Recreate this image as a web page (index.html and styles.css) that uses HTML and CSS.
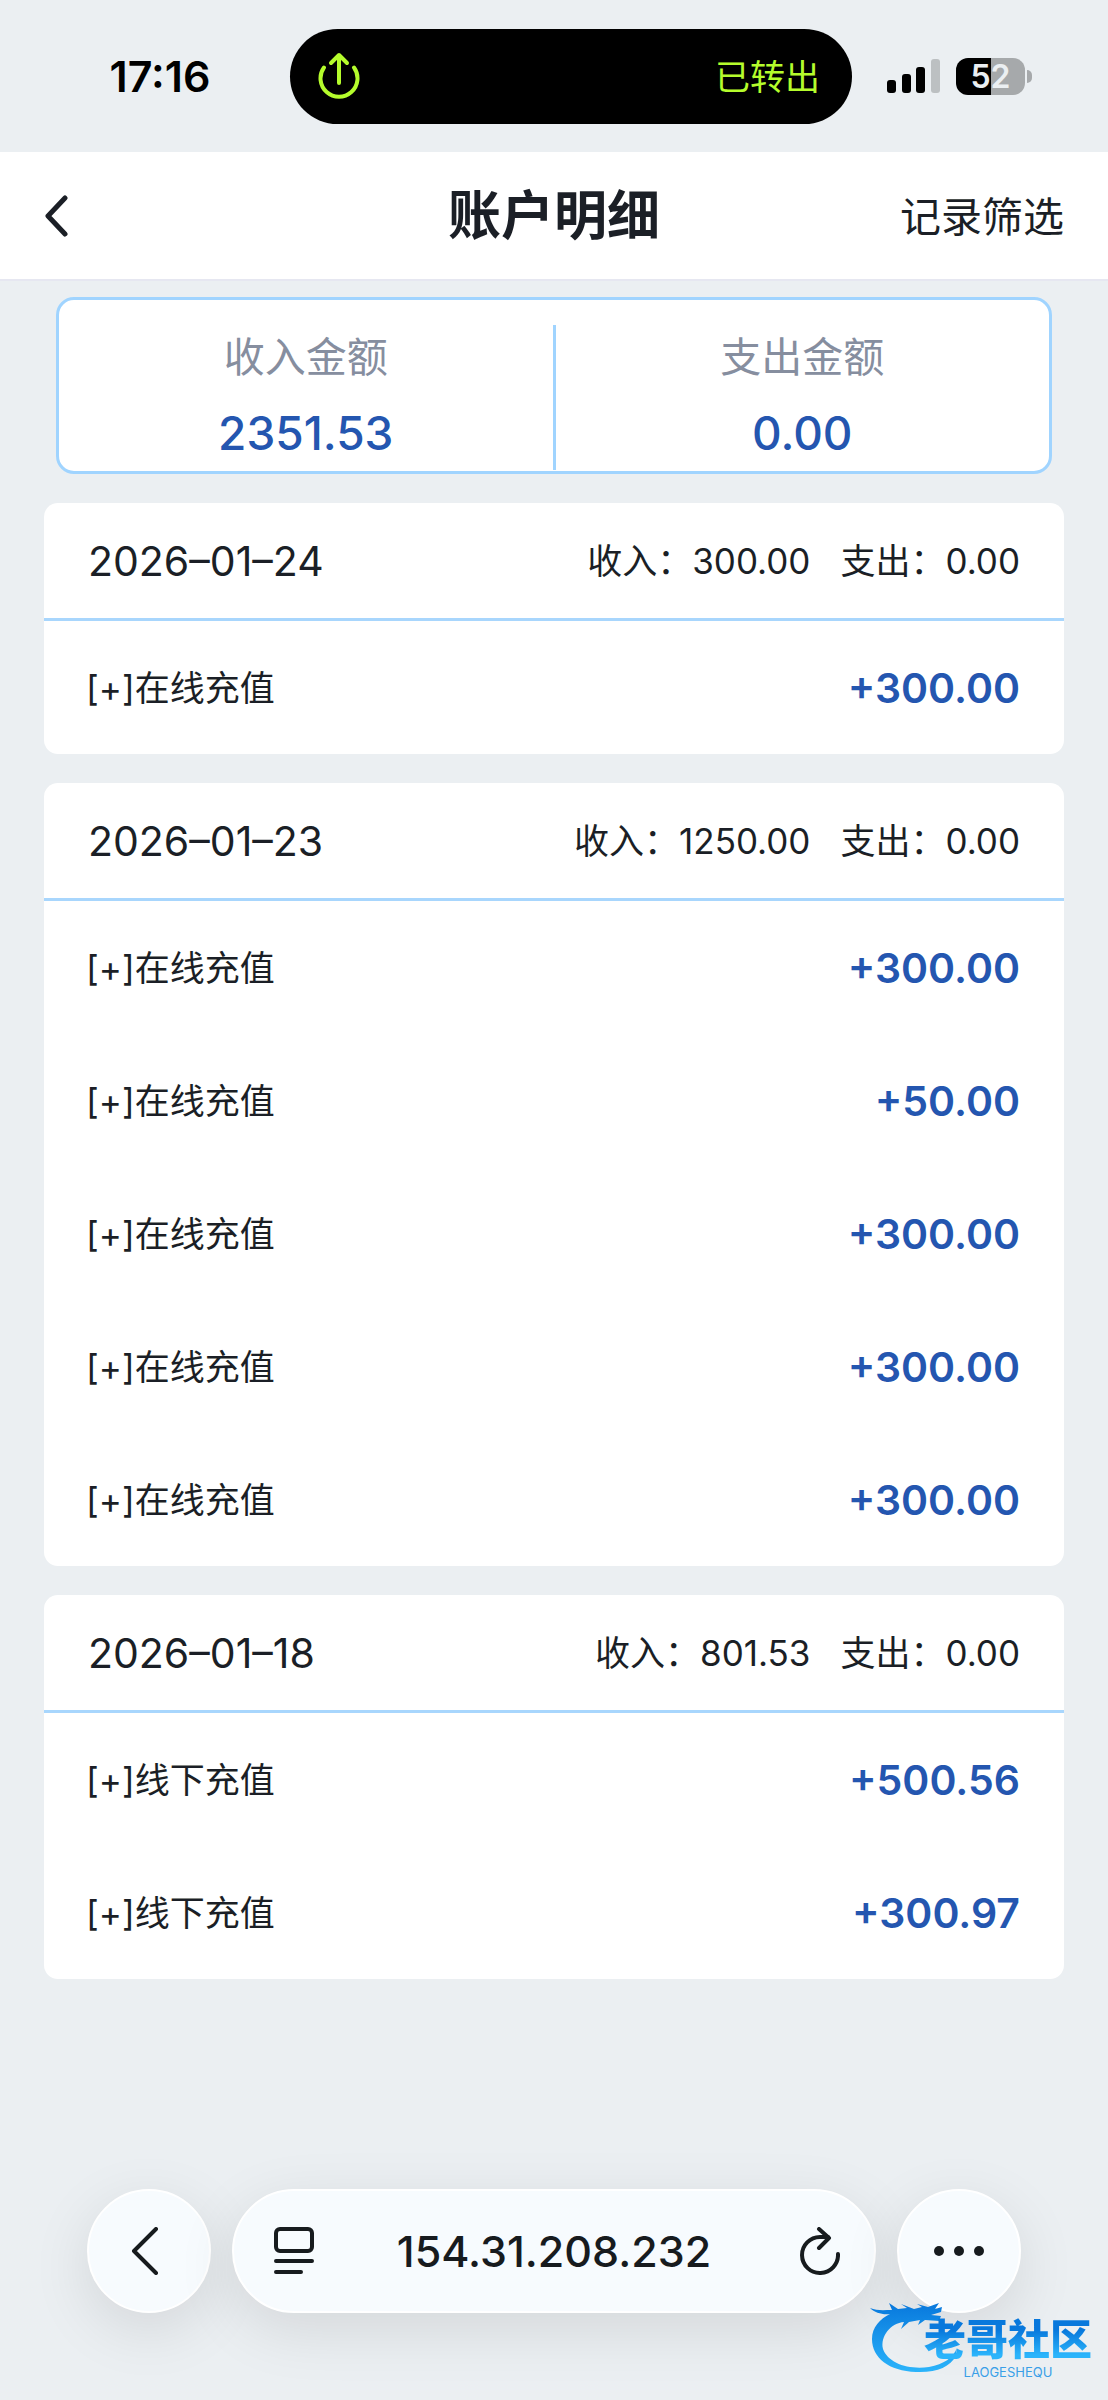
FILE: index.html
```html
<!DOCTYPE html>
<html lang="zh-CN">
<head>
	<meta charset="UTF-8">
	<meta name="viewport" content="width=device-width, initial-scale=1">
	<title>账户明细</title>
	<link rel="stylesheet" href="styles.css">
</head>
<body>
	<div class="status">
		<div class="time">17:16</div>
		<div class="island">
			<svg width="42" height="48" viewBox="0 0 42 48" fill="none" stroke="#b5fc2c" stroke-width="4" stroke-linecap="round" stroke-linejoin="round">
				<path d="M21 31V3M13 11l8-8 8 8"/>
				<path d="M6 15.5a18.5 18.5 0 1 0 30 0"/>
			</svg>
			<span>已转出</span>
		</div>
		<div class="state">
			<svg width="54" height="34" viewBox="0 0 54 34">
				<rect x="0" y="21" width="9" height="13" rx="3"/>
				<rect x="15" y="15" width="9" height="19" rx="3"/>
				<rect x="29" y="8" width="9" height="26" rx="3"/>
				<rect x="44" y="0" width="9" height="34" rx="3" fill="#bcc0c2"/>
			</svg>
			<div class="battery">52</div>
		</div>
	</div>

	<header class="header">
		<button class="back" type="button" aria-label="返回">
			<svg width="24" height="42" viewBox="0 0 24 42" fill="none" stroke="#1b1f26" stroke-width="5" stroke-linecap="round" stroke-linejoin="round">
				<path d="M21 3L4 21l17 18"/>
			</svg>
		</button>
		<h1>账户明细</h1>
		<button class="filter" type="button">记录筛选</button>
	</header>

	<main class="main">
		<section class="total">
			<div class="total-item">
				<p>收入金额</p>
				<strong>2351.53</strong>
			</div>
			<div class="total-item">
				<p>支出金额</p>
				<strong>0.00</strong>
			</div>
		</section>

		<section class="card">
			<div class="card-head">
				<h2>2026–01–24</h2>
				<span>收入：300.00</span>
				<span>支出：0.00</span>
			</div>
			<ul>
				<li><span>[+]在线充值</span><b>+300.00</b></li>
			</ul>
		</section>

		<section class="card">
			<div class="card-head">
				<h2>2026–01–23</h2>
				<span>收入：1250.00</span>
				<span>支出：0.00</span>
			</div>
			<ul>
				<li><span>[+]在线充值</span><b>+300.00</b></li>
				<li><span>[+]在线充值</span><b>+50.00</b></li>
				<li><span>[+]在线充值</span><b>+300.00</b></li>
				<li><span>[+]在线充值</span><b>+300.00</b></li>
				<li><span>[+]在线充值</span><b>+300.00</b></li>
			</ul>
		</section>

		<section class="card">
			<div class="card-head">
				<h2>2026–01–18</h2>
				<span>收入：801.53</span>
				<span>支出：0.00</span>
			</div>
			<ul>
				<li><span>[+]线下充值</span><b>+500.56</b></li>
				<li><span>[+]线下充值</span><b>+300.97</b></li>
			</ul>
		</section>
	</main>

	<nav class="browser">
		<button class="round" type="button" aria-label="后退">
			<svg width="44" height="48" viewBox="0 0 44 48" fill="none" stroke="#171b1e" stroke-width="4" stroke-linecap="round" stroke-linejoin="round">
				<path d="M29 2L7 24l22 22"/>
			</svg>
		</button>
		<div class="address">
			<button class="page-menu" type="button" aria-label="页面菜单">
				<svg width="40" height="48" viewBox="0 0 40 48" fill="none" stroke="#171b1e" stroke-width="4" stroke-linecap="round">
					<rect x="2" y="2" width="36" height="22" rx="4"/>
					<path d="M2 34h36M2 45h25"/>
				</svg>
			</button>
			<input type="text" value="154.31.208.232" aria-label="地址" readonly>
			<button class="reload" type="button" aria-label="刷新">
				<svg width="40" height="48" viewBox="0 0 40 48" fill="none" stroke="#171b1e" stroke-width="4" stroke-linecap="round" stroke-linejoin="round">
					<path d="M38 27a18 18 0 1 1-18-17h8"/>
					<path d="M19 2l10 9-10 10"/>
				</svg>
			</button>
		</div>
		<button class="round" type="button" aria-label="更多">
			<svg width="52" height="12" viewBox="0 0 52 12" fill="#171b1e">
				<circle cx="6" cy="6" r="5"/>
				<circle cx="26" cy="6" r="5"/>
				<circle cx="46" cy="6" r="5"/>
			</svg>
		</button>
	</nav>

	<!-- 社区水印 -->
	<div class="mark">
		<svg class="dragon" width="96" height="76" viewBox="0 0 96 76">
			<defs>
				<linearGradient id="blue" x1="0" y1="0" x2="0" y2="1">
					<stop offset="0" stop-color="#0878dc"/>
					<stop offset="1" stop-color="#2bb4fb"/>
				</linearGradient>
			</defs>
			<path fill="url(#blue)" d="M0 9c7 3 14 2 22 2l-3-7 9 6 9-1-6-4 13 5 8-2-5-3 11 3 11-4-4 6 7-2-1 5-10 3 10 1-2 5-14-1-7 5 2-5-11 2-8 7 3-7C21 24 10 37 13 50c5 14 25 21 46 18 15-3 24-9 28-19l-1 8C80 68 66 74 46 73 19 72 2 59 2 40 2 28 10 20 20 15 13 16 5 14 0 9z"/>
		</svg>
		<div class="mark-text">
			<b>老哥社区</b>
			<small>LAOGESHEQU</small>
		</div>
	</div>
</body>
</html>
```

FILE: styles.css
```css
* {
    box-sizing: border-box;
}
body {
    position: relative;
    display: flex;
    flex-direction: column;
    min-height: 100vh;
    margin: 0;
    background: #ebeff2;
    color: #1b1f26;
    font-family: Inter, "Noto Sans CJK SC", sans-serif;
}
h1, h2, p, ul {
    margin: 0;
    padding: 0;
}
button, input {
    padding: 0;
    border: 0;
    background: none;
    color: inherit;
    font-family: inherit;
}
svg {
    display: block;
}

/* 状态栏 */
.status {
    display: grid;
    grid-template-columns: 290fr 562px 256fr;
    align-items: center;
    height: 152px;
    color: #000;
}
.time {
    padding-left: 30px;
    font-size: 43px;
    font-weight: 600;
    text-align: center;
}
.island {
    display: flex;
    align-items: center;
    justify-content: space-between;
    height: 95px;
    padding: 0 32px 0 28px;
    border-radius: 48px;
    background: #000;
    color: #b5fc2c;
    font-size: 35px;
}
.island span, .filter, .card span {
    padding-bottom: 4px;
}
.state {
    display: flex;
    align-items: center;
    gap: 15px;
    padding-left: 35px;
}
.battery {
    position: relative;
    width: 69px;
    height: 37px;
    border-radius: 12px;
    background: linear-gradient(90deg, #000 51%, #a6a9ab 51%);
    color: #ebeff2;
    font-size: 32px;
    font-weight: 600;
    line-height: 37px;
    text-align: center;
}
.battery::after {
    content: "";
    position: absolute;
    top: 12px;
    right: -7px;
    width: 5px;
    height: 13px;
    border-radius: 0 6px 6px 0;
    background: #a6a9ab;
}

/* 标题栏 */
.header {
    display: grid;
    grid-template-columns: 1fr auto 1fr;
    align-items: center;
    height: 129px;
    padding: 0 44px;
    border-bottom: 2px solid #e6e7f1;
    background: #fff;
}
.header h1 {
    font-size: 53px;
    font-weight: 700;
    line-height: 76px;
}
.back {
    justify-self: start;
}
.filter {
    justify-self: end;
    font-size: 41px;
}

.main {
    padding: 16px 44px 0;
}
.total {
    display: flex;
    height: 177px;
    margin: 0 12px 29px;
    padding: 25px 0 1px;
    border: 3px solid #a0d4ff;
    border-radius: 18px;
    background: #fff;
}
.total-item {
    flex: 1;
    text-align: center;
}
.total-item:first-child {
    border-right: 3px solid #a0d4ff;
}
.total p {
    color: #868e9f;
    font-size: 41px;
    line-height: 64px;
}
.total strong {
    display: block;
    color: #2456b0;
    font-size: 46px;
    font-weight: 500;
    line-height: 88px;
}

/* 每日明细 */
.card {
    margin-bottom: 29px;
    border-radius: 14px;
    background: #fff;
}
.card-head {
    display: flex;
    align-items: center;
    gap: 30px;
    height: 118px;
    padding: 0 44px;
    border-bottom: 3px solid #a8d6fd;
    font-size: 35px;
}
.card-head h2 {
    margin-right: auto;
    font-size: 41px;
    font-weight: 400;
}
.card ul {
    list-style: none;
}
.card li {
    display: flex;
    align-items: center;
    justify-content: space-between;
    height: 133px;
    padding: 0 44px 0 42px;
    font-size: 35px;
}
.card b {
    color: #2456b0;
    font-size: 41px;
    font-weight: 600;
}

/* 浏览器底栏 */
.browser {
    display: flex;
    gap: 21px;
    margin-top: auto;
    padding: 0 87px 87px;
    color: #171b1e;
}
.round, .address {
    display: flex;
    align-items: center;
    justify-content: center;
    height: 124px;
    border: 2px solid #fff;
    border-radius: 62px;
    background: #f7fbfe;
    box-shadow: 0 16px 60px rgba(0, 0, 0, .1);
}
.round {
    flex: none;
    width: 124px;
}
.address {
    flex: 1;
    min-width: 0;
    padding: 0 28px 0 40px;
}
.address input {
    flex: 1;
    min-width: 0;
    font-size: 43px;
    font-weight: 500;
    text-align: center;
}
.reload {
    display: flex;
    justify-content: center;
    width: 52px;
}

.mark {
    position: absolute;
    right: 16px;
    bottom: 25px;
    width: 222px;
    height: 76px;
}
.dragon {
    position: absolute;
    top: 0;
    left: 0;
}
.mark-text {
    position: absolute;
    top: 16px;
    right: 0;
    display: flex;
    flex-direction: column;
}
.mark-text b {
    background: linear-gradient(#0878dc 30%, #2bb4fb 80%);
    background-clip: text;
    color: transparent;
    font-size: 42px;
    font-weight: 900;
    line-height: 50px;
}
.mark-text small {
    align-self: center;
    color: #3a9fe8;
    font-size: 13px;
    line-height: 14px;
}
```
